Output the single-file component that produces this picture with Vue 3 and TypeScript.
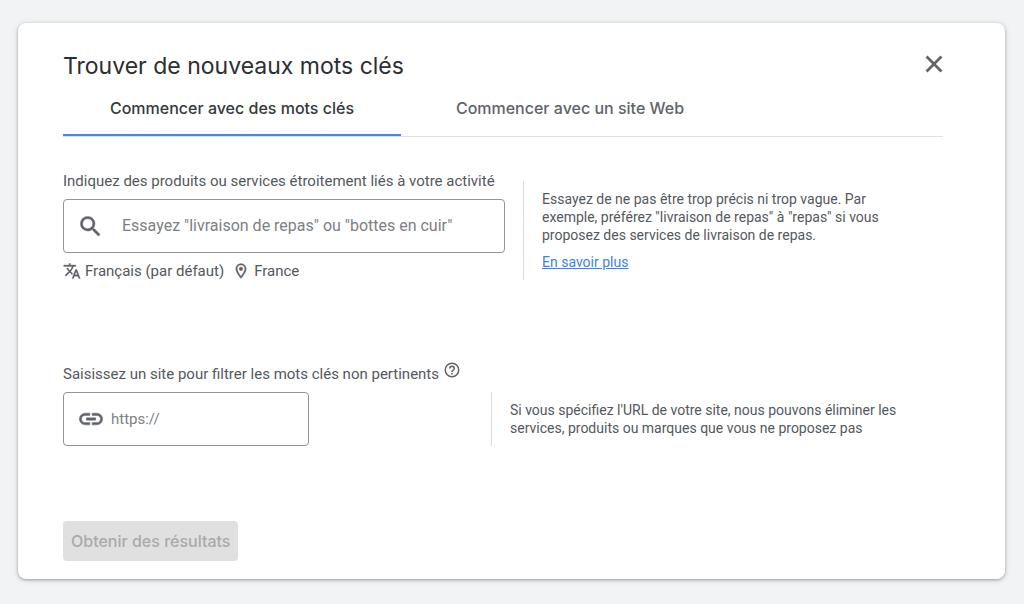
<script setup lang="ts">
import { ref } from 'vue'

type TabId = 'keywords' | 'website'

const tabs: { id: TabId; label: string }[] = [
  { id: 'keywords', label: 'Commencer avec des mots clés' },
  { id: 'website', label: 'Commencer avec un site Web' },
]
const activeTab = ref<TabId>('keywords')
const products = ref('')
const site = ref('')
</script>

<template>
  <main class="card">
    <header class="header">
      <h1 class="title">Trouver de nouveaux mots clés</h1>
      <button class="close" type="button" aria-label="Fermer">
        <svg class="heavy" viewBox="0 0 24 24" width="28" height="28" aria-hidden="true">
          <path d="M19 6.41 17.59 5 12 10.59 6.41 5 5 6.41 10.59 12 5 17.59 6.41 19 12 13.41 17.59 19 19 17.59 13.41 12z" />
        </svg>
      </button>
    </header>

    <div class="tabs" role="tablist">
      <button
        v-for="tab in tabs"
        :key="tab.id"
        class="tab"
        :class="{ active: tab.id === activeTab }"
        type="button"
        role="tab"
        :aria-selected="tab.id === activeTab"
        @click="activeTab = tab.id"
      >
        {{ tab.label }}
      </button>
    </div>

    <section class="row">
      <div class="field wide">
        <label class="label" for="products">Indiquez des produits ou services étroitement liés à votre activité</label>
        <div class="box search">
          <svg class="heavy" viewBox="0 0 24 24" width="27" height="27" aria-hidden="true">
            <path d="M15.5 14h-.79l-.28-.27A6.47 6.47 0 0 0 16 9.5 6.5 6.5 0 1 0 9.5 16c1.61 0 3.09-.59 4.23-1.57l.27.28v.79l5 4.99L20.49 19zm-6 0a4.5 4.5 0 1 1 0-9 4.5 4.5 0 0 1 0 9z" />
          </svg>
          <input id="products" v-model="products" type="text" placeholder="Essayez &quot;livraison de repas&quot; ou &quot;bottes en cuir&quot;" />
        </div>
        <div class="settings">
          <button class="setting" type="button">
            <svg class="heavy" viewBox="0 0 24 24" width="18" height="18" aria-hidden="true">
              <path d="m12.87 15.07-2.54-2.51.03-.03A17.5 17.5 0 0 0 14.07 6H17V4h-7V2H8v2H1v2h11.17A15.7 15.7 0 0 1 9 11.35 15.6 15.6 0 0 1 6.69 8h-2a17.6 17.6 0 0 0 2.98 4.56l-5.09 5.02L4 19l5-5 3.11 3.11zM18.5 10h-2L12 22h2l1.12-3h4.75L21 22h2zm-2.62 7 1.62-4.33L19.12 17z" />
            </svg>
            Français (par défaut)
          </button>
          <button class="setting" type="button">
            <svg class="heavy" viewBox="0 0 24 24" width="18" height="18" aria-hidden="true">
              <path d="M12 2a7 7 0 0 0-7 7c0 5.25 7 13 7 13s7-7.75 7-13a7 7 0 0 0-7-7zM7 9a5 5 0 0 1 10 0c0 2.88-2.88 7.19-5 9.88C9.92 16.21 7 11.85 7 9z" />
              <circle cx="12" cy="9" r="2.5" />
            </svg>
            France
          </button>
        </div>
      </div>
      <aside class="note">
        <p>Essayez de ne pas être trop précis ni trop vague. Par exemple, préférez "livraison de repas" à "repas" si vous proposez des services de livraison de repas.</p>
        <a href="#">En savoir plus</a>
      </aside>
    </section>

    <section class="filter">
      <div class="label-line">
        <label class="label" for="site">Saisissez un site pour filtrer les mots clés non pertinents</label>
        <button class="help" type="button" aria-label="Aide">
          <svg viewBox="0 0 24 24" width="18" height="18" aria-hidden="true">
            <path d="M11 18h2v-2h-2zm1-16a10 10 0 1 0 0 20 10 10 0 0 0 0-20zm0 18a8 8 0 1 1 0-16 8 8 0 0 1 0 16zm0-14a4 4 0 0 0-4 4h2a2 2 0 1 1 4 0c0 2-3 1.75-3 5h2c0-2.25 3-2.5 3-5a4 4 0 0 0-4-4z" />
          </svg>
        </button>
      </div>
      <div class="row">
        <div class="box site">
          <svg class="heavy" viewBox="0 0 24 24" width="28" height="28" aria-hidden="true">
            <path d="M3.9 12A3.1 3.1 0 0 1 7 8.9h4V7H7a5 5 0 0 0 0 10h4v-1.9H7A3.1 3.1 0 0 1 3.9 12zM8 13h8v-2H8zm9-6h-4v1.9h4a3.1 3.1 0 0 1 0 6.2h-4V17h4a5 5 0 0 0 0-10z" />
          </svg>
          <input id="site" v-model="site" type="url" placeholder="https://" />
        </div>
        <aside class="note site-note">
          <p>Si vous spécifiez l'URL de votre site, nous pouvons éliminer les services, produits ou marques que vous ne proposez pas</p>
        </aside>
      </div>
    </section>

    <button class="submit" type="button" disabled>Obtenir des résultats</button>
  </main>
</template>

<style>
body {
  background: #f1f3f4;
}
</style>

<style scoped>
* {
  box-sizing: border-box;
}

.card {
  margin: 23px 19px 24px 18px;
  padding: 24px 62px 18px 45px;
  border-radius: 8px;
  background: #fff;
  box-shadow: 0 1px 3px rgba(60, 64, 67, 0.4), 0 1px 6px rgba(60, 64, 67, 0.15);
  color: #54585d;
  font-family: Roboto, "Liberation Sans", sans-serif;
  font-size: 15px;
}

button {
  padding: 0;
  border: 0;
  background: none;
  color: inherit;
  font: inherit;
  cursor: pointer;
}

svg {
  display: block;
  flex: none;
  fill: #5f6368;
}

.heavy {
  stroke: #5f6368;
  stroke-width: 0.4;
}

.header {
  display: flex;
  justify-content: space-between;
  height: 38px;
}

.title {
  margin: 0;
  color: #2b2e32;
  font: 400 23px/38px "Google Sans", Inter, sans-serif;
}

.close {
  width: 28px;
  height: 34px;
  margin-right: -5px;
}

.tabs {
  display: flex;
  border-bottom: 1px solid #dfe1e5;
}

.tab {
  flex: 0 1 338px;
  height: 51px;
  padding-bottom: 4px;
  border-bottom: 2px solid transparent;
  color: #5f6368;
  font: 500 16px/20px "Google Sans", Inter, sans-serif;
}

.tab.active {
  border-color: #4487e8;
  color: #35383c;
}

.row {
  display: flex;
}

.tabs + .row {
  margin-top: 34px;
}

.wide {
  flex: 0 1 442px;
}

.label {
  display: block;
  line-height: 20px;
}

.box {
  display: flex;
  align-items: center;
  min-width: 0;
  height: 54px;
  border: 1px solid #8f9499;
  border-radius: 4px;
}

.search {
  margin-top: 8px;
  padding: 0 13px;
  gap: 18px;
}

.box input {
  flex: 1;
  min-width: 0;
  padding: 0;
  border: 0;
  outline: 0;
  background: none;
  color: #3c4043;
  font: 16px/24px Roboto, "Liberation Sans", sans-serif;
}

.box input::placeholder {
  color: #7c7f83;
  opacity: 1;
}

.settings {
  display: flex;
  gap: 8px;
  margin-top: 8px;
}

.setting {
  display: flex;
  align-items: center;
  gap: 4px;
  line-height: 20px;
}

.note {
  flex: 0 1 388px;
  margin-left: 18px;
  padding: 9px 0 9px 18px;
  border-left: 1px solid #dadce0;
  font-size: 14px;
  line-height: 18px;
}

.tabs + .row .note {
  align-self: flex-start;
  margin-top: 10px;
}

.note p {
  margin: 0 0 9px;
}

.note a {
  color: #3b82ea;
}

.filter {
  margin-top: 83px;
}

.label-line {
  display: flex;
  gap: 4px;
}

.help {
  height: 18px;
  margin-top: -3px;
}

.filter .row {
  margin-top: 8px;
}

.site {
  flex: 0 1 246px;
  padding: 0 13px;
  gap: 6px;
}

.box.site input {
  font-size: 15px;
}

.site-note {
  flex-basis: 420px;
  margin-left: 182px;
}

.site-note p {
  margin: 0;
}

.submit {
  height: 40px;
  margin-top: 75px;
  padding: 0 8px;
  border-radius: 4px;
  background: #e0e0e0;
  color: #a8aaab;
  font: 500 16px/20px "Google Sans", Inter, sans-serif;
  cursor: default;
}
</style>
